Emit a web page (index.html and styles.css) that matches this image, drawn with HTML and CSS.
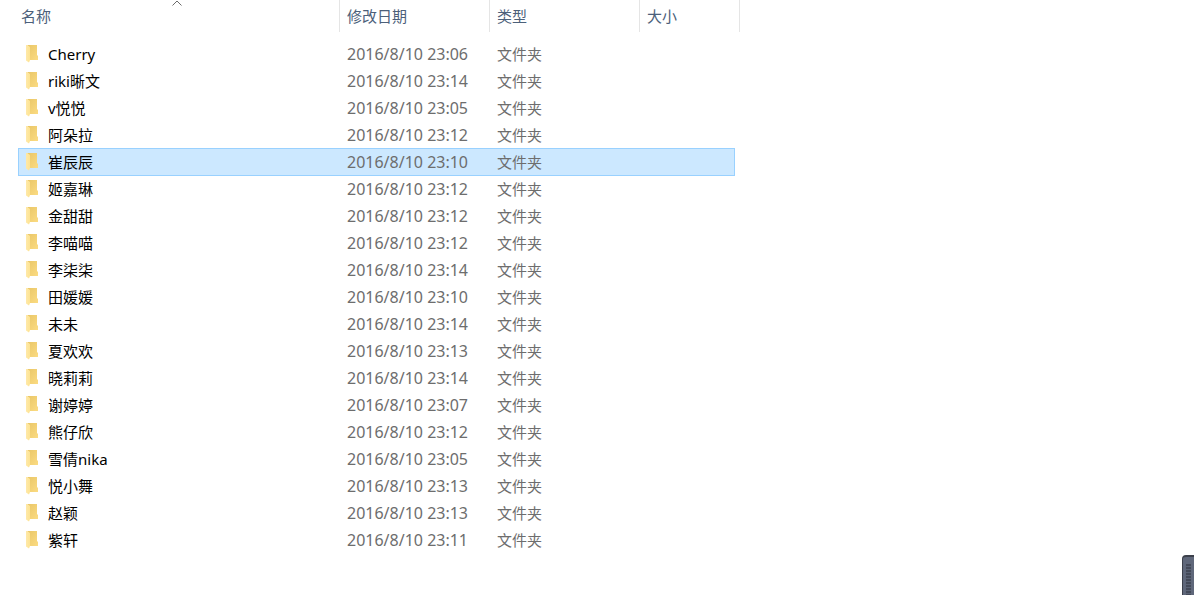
FILE: index.html
```
<!DOCTYPE html>
<html lang="zh-CN">
<head>
  <meta charset="UTF-8">
  <meta name="viewport" content="width=device-width, initial-scale=1.0">
  <title>文件夹</title>
  <link rel="stylesheet" href="styles.css">
</head>
<body>
  <svg class="defs" aria-hidden="true">
    <defs>
      <linearGradient id="back" x1="0" y1="0" x2="1" y2="1">
        <stop offset="0" stop-color="#e9c667"/>
        <stop offset="1" stop-color="#fbdb82"/>
      </linearGradient>
      <linearGradient id="flap" x1="0" y1="0" x2="1" y2="0">
        <stop offset="0" stop-color="#ffe9a9"/>
        <stop offset="1" stop-color="#fde392"/>
      </linearGradient>
      <symbol id="folder" viewBox="0 0 13 18">
        <path d="M1 0H11V10L12 11V15H3V2Z" fill="url(#back)"/>
        <path d="M0 0H1L4 2V15L3 17.500L0 15.500Z" fill="url(#flap)"/>
      </symbol>
    </defs>
  </svg>

  <main class="explorer">
    <table class="files">
      <colgroup>
        <col class="col-name">
        <col class="col-date">
        <col class="col-type">
        <col class="col-size">
        <col class="col-end">
      </colgroup>
      <thead>
        <tr>
          <th class="sorted" scope="col" aria-sort="ascending">名称
            <svg class="sort" viewBox="0 0 10 6" aria-hidden="true"><path d="M.5 5.500L5 1L9.500 5.500" fill="none" stroke="#6b6b6b"/></svg>
          </th>
          <th scope="col">修改日期</th>
          <th scope="col">类型</th>
          <th scope="col" colspan="2">大小</th>
        </tr>
      </thead>
      <tbody id="rows"></tbody>
    </table>
  </main>
  <div class="grip"></div>

  <script>
    const folders = [
      ['Cherry', '23:06'],
      ['riki晰文', '23:14'],
      ['v悦悦', '23:05'],
      ['阿朵拉', '23:12'],
      ['崔辰辰', '23:10'],
      ['姬嘉琳', '23:12'],
      ['金甜甜', '23:12'],
      ['李喵喵', '23:12'],
      ['李柒柒', '23:14'],
      ['田媛媛', '23:10'],
      ['未未', '23:14'],
      ['夏欢欢', '23:13'],
      ['晓莉莉', '23:14'],
      ['谢婷婷', '23:07'],
      ['熊仔欣', '23:12'],
      ['雪倩nika', '23:05'],
      ['悦小舞', '23:13'],
      ['赵颖', '23:13'],
      ['紫轩', '23:11']
    ];
    const selected = '崔辰辰';

    document.getElementById('rows').innerHTML = folders.map(([name, time]) => `
      <tr${name === selected ? ' class="selected"' : ''}>
        <td class="name"><svg class="folder" aria-hidden="true"><use href="#folder"/></svg>${name}</td>
        <td class="date">2016/8/10 ${time}</td>
        <td>文件夹</td>
        <td></td>
      </tr>`).join('');
  </script>
</body>
</html>
```
FILE: styles.css
```
body {
  margin: 0;
  background: #fff;
  color: #6d6d6d;
  font-family: "Noto Sans", "Noto Sans CJK SC", sans-serif;
  font-size: 15px;
  line-height: 20px;
}
.defs {
  position: absolute;
  width: 0;
  height: 0;
}
.explorer {
  padding-left: 18px;
}
.files {
  width: 722px;
  table-layout: fixed;
  border-collapse: separate;
  border-spacing: 0;
}
.col-name {
  width: 322px;
}
.col-date,
.col-type {
  width: 150px;
}
.col-size {
  width: 95px;
}
.col-end {
  width: 5px;
}
th {
  position: relative;
  box-sizing: border-box;
  height: 32px;
  padding: 0 0 0 7px;
  border-right: 1px solid #e5e5e5;
  color: #4c607a;
  font-weight: normal;
  text-align: left;
}
th.sorted {
  padding-left: 3px;
}
.sort {
  position: absolute;
  top: 0;
  left: 50%;
  width: 10px;
  height: 6px;
  margin-left: -7px;
}
tbody::before {
  content: "";
  display: block;
  height: 8px;
}
td {
  box-sizing: border-box;
  height: 27px;
  padding: 1px 0 0 7px;
  white-space: nowrap;
}
.name {
  padding-left: 8px;
  color: #000;
}
.date {
  font-size: 16px;
}
.folder {
  width: 13px;
  height: 18px;
  margin-right: 9px;
  vertical-align: -3px;
}
.selected td {
  height: 28px;
  padding-top: 0;
  background: #cce8ff;
  border: 0 solid #99d1ff;
  border-width: 1px 0;
}
.selected td:first-child {
  padding-left: 7px;
  border-left-width: 1px;
}
.selected td:last-child {
  border-right-width: 1px;
}
/* the selection frame takes its extra pixel from the row below */
.selected + tr td {
  height: 26px;
  padding-top: 0;
}
.grip {
  position: fixed;
  right: 0;
  bottom: 0;
  box-sizing: border-box;
  width: 12px;
  height: 40px;
  padding: 7px 3px 0;
  border: solid #3c404b;
  border-width: 2px 0 0 1px;
  border-radius: 4px 0 0 0;
  background: repeating-linear-gradient(#444a59 0 2px, #5a6274 2px 3px) content-box, #5f677a;
}
```
